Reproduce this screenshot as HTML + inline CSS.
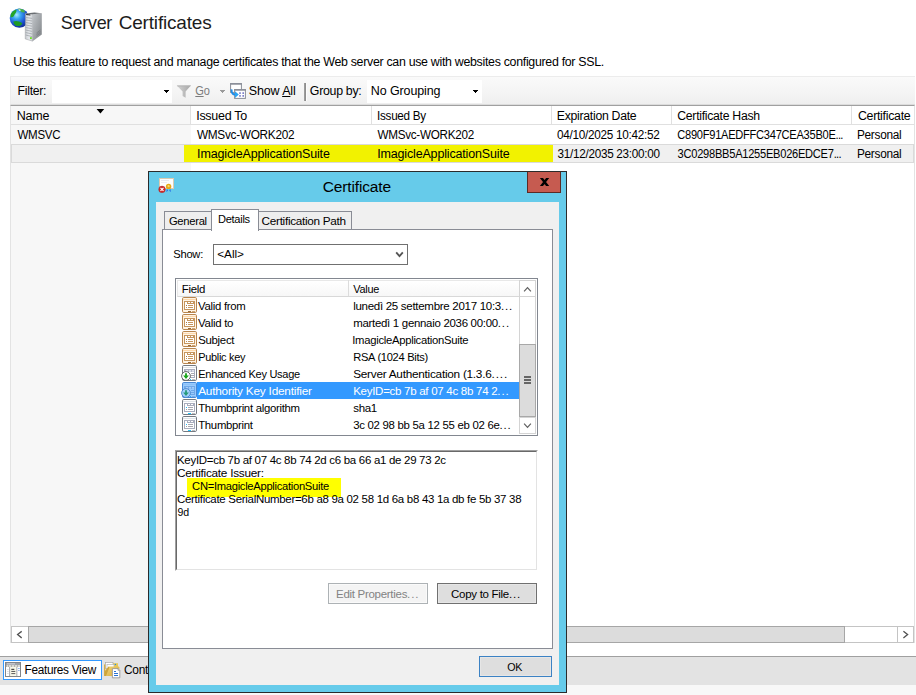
<!DOCTYPE html>
<html>
<head>
<meta charset="utf-8">
<title>Server Certificates</title>
<style>
*{box-sizing:border-box;margin:0;padding:0}
html,body{width:916px;height:695px;overflow:hidden;background:#fff}
body{font-family:"Liberation Sans",sans-serif;font-size:12px;color:#000;position:relative}
.a{position:absolute;white-space:nowrap}
.t{position:absolute;white-space:nowrap;line-height:14px;font-size:12.5px;color:#000}
.d{position:absolute;white-space:nowrap;line-height:13px;font-size:11.8px;color:#000}
u{text-decoration:underline}
</style>
</head>
<body>

<!-- ===== MAIN WINDOW ===== -->
<div class="a" id="title" style="left:60px;top:11px;letter-spacing:-0.300px;transform:translateX(0.80px) scaleX(0.9468);transform-origin:0 0;font-size:19px;line-height:24px;color:#1c1c1c">Server</div>
<div class="a" id="title2" style="left:118.70px;top:11px;letter-spacing:-0.184px;font-size:19px;line-height:24px;color:#1c1c1c">Certificates</div>
<div class="t" id="desc" style="left:13px;top:55px;letter-spacing:-0.300px;transform:translateX(0.30px) scaleX(0.9898);transform-origin:0 0">Use this feature to request and manage certificates that the Web server can use with websites configured for SSL.</div>

<!-- toolbar -->
<div class="a" style="left:10px;top:76px;width:905px;height:29px;background:linear-gradient(#fafafa,#f4f4f4 60%,#efefef);border-top:1px solid #ececec;border-left:1px solid #ececec;border-bottom:1px solid #dcdcdc"></div>
<div class="a" style="left:52px;top:80px;width:120px;height:23px;background:#fff"></div>
<div class="a" style="left:367px;top:80px;width:115px;height:23px;background:#fff"></div>
<div class="t" id="filter" style="left:17px;top:84px;letter-spacing:-0.300px;transform:translateX(0.62px) scaleX(0.9794);transform-origin:0 0">Filter:</div>
<div class="t" id="go" style="left:195px;top:84px;letter-spacing:-0.300px;transform:translateX(0.30px) scaleX(0.8829);transform-origin:0 0;color:#7c7c7c"><u>G</u>o</div>
<div class="t" id="showall" style="left:248.70px;top:84px;letter-spacing:-0.122px">Show <u>A</u>ll</div>
<div class="a" style="left:304px;top:83px;width:2px;height:18px;background:#9c9c9c;border-right:1px solid #8e8e8e"></div><div class="a" style="left:306px;top:83px;width:1px;height:18px;background:#fcfcfc"></div>
<div class="t" id="groupby" style="left:309px;top:84px;letter-spacing:-0.300px;transform:translateX(0.80px) scaleX(0.9901);transform-origin:0 0">Group by:</div>
<div class="t" id="nogroup" style="left:370.80px;top:84px;letter-spacing:-0.112px">No Grouping</div>

<!-- list -->
<div class="a" id="list" style="left:10px;top:105px;width:905px;height:538px;border:1px solid #e3e3e3;border-top:1px solid #a0a0a0;background:#fff"></div>
<div class="a" style="left:11px;top:106px;width:180px;height:520px;background:#f7f7f7"></div>
<!-- header -->
<div class="a" style="left:11px;top:106px;width:903px;height:19px;border-bottom:1px solid #e0e0e0"></div>
<div class="t" id="hName" style="left:16.80px;top:109px;letter-spacing:-0.231px">Name</div>
<div class="t" id="hTo" style="left:196.20px;top:109px;letter-spacing:-0.281px">Issued To</div>
<div class="t" id="hBy" style="left:377px;top:109px;letter-spacing:-0.300px;transform:translateX(0.07px) scaleX(0.9342);transform-origin:0 0">Issued By</div>
<div class="t" id="hExp" style="left:556px;top:109px;letter-spacing:-0.300px;transform:translateX(0.82px) scaleX(0.9824);transform-origin:0 0">Expiration Date</div>
<div class="t" id="hHash" style="left:677px;top:109px;letter-spacing:-0.300px;transform:translateX(0.30px) scaleX(0.9802);transform-origin:0 0">Certificate Hash</div>
<div class="t" id="hCert" style="left:857px;top:109px;letter-spacing:-0.300px;transform:translateX(0.90px) scaleX(0.9903);transform-origin:0 0">Certificate</div>
<!-- rows -->
<div class="a" style="left:11px;top:144px;width:903px;height:19px;background:#f0f0f0;border:1px solid #dadada"></div>
<div class="a" style="left:184px;top:145px;width:369px;height:17px;background:#f2f200"></div>
<div class="t" id="r1a" style="left:17px;top:128px;letter-spacing:-0.300px;transform:translateX(0.50px) scaleX(0.9232);transform-origin:0 0">WMSVC</div>
<div class="t" id="r1b" style="left:196px;top:128px;letter-spacing:-0.300px;transform:translateX(0.90px) scaleX(0.9449);transform-origin:0 0">WMSvc-WORK202</div>
<div class="t" id="r1c" style="left:377px;top:128px;letter-spacing:-0.300px;transform:translateX(0.50px) scaleX(0.9352);transform-origin:0 0">WMSvc-WORK202</div>
<div class="t" id="r1d" style="left:557px;top:128px;letter-spacing:-0.300px;transform:translateX(0.10px) scaleX(0.9402);transform-origin:0 0">04/10/2025 10:42:52</div>
<div class="t" id="r1e" style="left:677px;top:128px;letter-spacing:-0.300px;transform:translateX(0.30px) scaleX(0.8877);transform-origin:0 0">C890F91AEDFFC347CEA35B0E<span class="el" style="letter-spacing:-0.80px">...</span></div>
<div class="t" id="r1f" style="left:856px;top:128px;letter-spacing:-0.300px;transform:translateX(0.95px) scaleX(0.9459);transform-origin:0 0">Personal</div>
<div class="t" id="r2b" style="left:197.10px;top:147px;letter-spacing:-0.149px">ImagicleApplicationSuite</div>
<div class="t" id="r2c" style="left:377.20px;top:147px;letter-spacing:-0.162px">ImagicleApplicationSuite</div>
<div class="t" id="r2d" style="left:557px;top:147px;letter-spacing:-0.300px;transform:translateX(0.60px) scaleX(0.9365);transform-origin:0 0">31/12/2035 23:00:00</div>
<div class="t" id="r2e" style="left:677px;top:147px;letter-spacing:-0.300px;transform:translateX(0.60px) scaleX(0.8890);transform-origin:0 0">3C0298BB5A1255EB026EDCE7<span class="el" style="letter-spacing:-0.80px">...</span></div>
<div class="t" id="r2f" style="left:856px;top:147px;letter-spacing:-0.300px;transform:translateX(0.95px) scaleX(0.9459);transform-origin:0 0">Personal</div>


<!-- main icon: globe + server -->
<svg class="a" style="left:8px;top:6px" width="38" height="38" viewBox="8 6 38 38">
<defs>
<radialGradient id="gl" cx="0.36" cy="0.33" r="0.72"><stop offset="0" stop-color="#a8ecff"/><stop offset="0.3" stop-color="#3aa6f0"/><stop offset="0.7" stop-color="#1c4ed0"/><stop offset="1" stop-color="#0c2a90"/></radialGradient>
<linearGradient id="sf" x1="0" y1="0" x2="1" y2="0"><stop offset="0" stop-color="#c4c8cc"/><stop offset="0.5" stop-color="#e6e9ec"/><stop offset="1" stop-color="#cfd3d7"/></linearGradient>
<linearGradient id="ss" x1="0" y1="0" x2="1" y2="1"><stop offset="0" stop-color="#c2c6ca"/><stop offset="1" stop-color="#7e8286"/></linearGradient>
</defs>
<circle cx="19.3" cy="18.1" r="9.6" fill="url(#gl)"/>
<path d="M10.6,15.2 C11.2,12.6 13.2,10.6 16.2,9.6 C17,11.2 16,13 14.6,14.6 C14,16.6 12.6,17.6 10.6,17 Z" fill="#25a528"/>
<path d="M13.4,21.6 C15.6,20.2 19,21 22.4,23.2 C21.4,25.8 18,26.8 15.6,25.6 C14.2,24.6 13.5,23.2 13.4,21.6 Z" fill="#1f9a24"/>
<path d="M17.5,9 C19.5,8.4 22,8.8 24,10 L25.2,12.6 L21.5,12.2 C20.5,10.5 19,10.2 17.5,9 Z" fill="#49b04a"/>
<path d="M18.4,9.4 C19.4,9.2 20.4,9.6 21,10.6 L19.2,11 Z" fill="#e4f2e4"/>
<path d="M25.4,13.4 L32.6,14.2 L32.6,41.2 L25.2,38.9 Z" fill="url(#sf)" stroke="#8a8e92" stroke-width="0.4"/>
<path d="M32.6,14.2 L41.8,13.3 L41.8,34.6 L32.6,41.2 Z" fill="url(#ss)"/>
<path d="M25.4,13.4 L34.4,12.4 L41.8,13.3 L32.6,14.2 Z" fill="#6a6e72"/>
<path d="M26.2,14.1 L30.4,14.5 L30.4,15.6 L26.2,15.1 Z" fill="#1a1a1a"/>
<g stroke="#9a9ea4" stroke-width="0.7"><path d="M25.6,17.5 L32.2,18.4"/><path d="M25.6,20 L32.2,21"/><path d="M25.6,22.5 L32.2,23.6"/><path d="M25.6,25 L32.2,26.2"/><path d="M25.6,27.5 L32.2,28.8"/><path d="M25.6,30 L32.2,31.4"/><path d="M25.6,32.5 L32.2,34"/><path d="M25.6,35 L32.2,36.6"/></g>
<rect x="30" y="37.2" width="1.8" height="1.8" fill="#6ce020"/>
<g stroke="#6a6e72" stroke-width="0.5"><path d="M36.5,33 L40.5,30"/><path d="M36.5,34.5 L40.5,31.5"/><path d="M36.5,36 L40.5,33"/></g>
</svg>

<!-- toolbar icons -->
<svg class="a" style="left:176px;top:84px" width="16" height="15" viewBox="176 84 16 15">
<defs><linearGradient id="fn" x1="0" y1="0" x2="1" y2="0"><stop offset="0" stop-color="#d4d4d4"/><stop offset="1" stop-color="#a6a6a6"/></linearGradient></defs>
<path d="M176.8,85.4 H190.9 L185.6,91.6 V97.7 L182.6,96 V91.6 Z" fill="url(#fn)"/>
<path d="M176.8,85.4 H190.9 L190,86.5 H177.7 Z" fill="#b4b4b4"/>
</svg>
<svg class="a" style="left:164px;top:90px" width="5" height="3" viewBox="0 0 5 3"><rect x="0" y="0" width="5" height="1" fill="#000"/><rect x="1" y="1" width="3" height="1" fill="#000"/><rect x="2" y="2" width="1" height="1" fill="#000"/></svg>
<svg class="a" style="left:220px;top:90px" width="5" height="3" viewBox="0 0 5 3"><rect x="0" y="0" width="5" height="1" fill="#9a9a9a"/><rect x="1" y="1" width="3" height="1" fill="#9a9a9a"/><rect x="2" y="2" width="1" height="1" fill="#9a9a9a"/></svg>
<svg class="a" style="left:473px;top:90px" width="5" height="3" viewBox="0 0 5 3"><rect x="0" y="0" width="5" height="1" fill="#000"/><rect x="1" y="1" width="3" height="1" fill="#000"/><rect x="2" y="2" width="1" height="1" fill="#000"/></svg>
<svg class="a" style="left:229px;top:82px" width="18" height="18" viewBox="229 82 18 18">
<rect x="230.6" y="83.6" width="10.8" height="8.8" fill="#fff" stroke="#8a8e98" stroke-width="1"/>
<rect x="230.1" y="83.1" width="11.8" height="1.6" fill="#8a8e98"/>
<rect x="234.6" y="89.6" width="10.8" height="8.8" fill="#fff" stroke="#8a8e98" stroke-width="1"/>
<rect x="234.1" y="89.1" width="11.8" height="1.6" fill="#8a8e98"/>
<rect x="239.2" y="92.3" width="1.6" height="1.6" fill="#7074c4"/><rect x="242.4" y="92.3" width="1.6" height="1.6" fill="#7074c4"/>
<rect x="239.2" y="95.1" width="1.6" height="1.6" fill="#7074c4"/><rect x="242.4" y="95.1" width="1.6" height="1.6" fill="#7074c4"/>
<path d="M231.6,89.4 C231.4,93 232.6,94.8 235.6,94.6" fill="none" stroke="#1e8ce8" stroke-width="1.9"/>
<path d="M235,91.2 L238.8,94.6 L235,98 Z" fill="#28a4f4"/>
</svg>

<!-- sort arrow + header separators -->
<svg class="a" style="left:96px;top:109px" width="9" height="5" viewBox="0 0 9 5"><path d="M0.6,0 H8.2 L4.4,4.4 Z" fill="#000"/></svg>
<div class="a" style="left:190px;top:106px;width:1px;height:18px;background:#e0e0e0"></div>
<div class="a" style="left:371px;top:106px;width:1px;height:18px;background:#e0e0e0"></div>
<div class="a" style="left:551px;top:106px;width:1px;height:18px;background:#e0e0e0"></div>
<div class="a" style="left:671px;top:106px;width:1px;height:18px;background:#e0e0e0"></div>
<div class="a" style="left:851px;top:106px;width:1px;height:18px;background:#e0e0e0"></div>
<!-- h scrollbar -->
<div class="a" style="left:11px;top:626px;width:903px;height:17px;background:#fff;border:1px solid #c4c4c4"></div>
<div class="a" style="left:11px;top:626px;width:18px;height:17px;background:#fff;border:1px solid #c4c4c4"></div>
<div class="a" style="left:897px;top:626px;width:17px;height:17px;background:#fff;border:1px solid #c4c4c4"></div>
<div class="a" style="left:28px;top:626px;width:817px;height:17px;background:#dcdcdc;border:1px solid #a6a6a6"></div>


<!-- h scroll arrows -->
<svg class="a" style="left:16px;top:630px" width="6" height="10" viewBox="0 0 6 10"><path d="M5.7,1.3 L1.6,4.6 L5.7,7.9" stroke="#505050" stroke-width="1.3" fill="none"/></svg>
<svg class="a" style="left:903px;top:630px" width="6" height="10" viewBox="0 0 6 10"><path d="M0.4,1.3 L4.6,4.6 L0.4,7.9" stroke="#505050" stroke-width="1.3" fill="none"/></svg>
<!-- bottom bar -->
<div class="a" style="left:0;top:656px;width:916px;height:29px;background:#e3e3e3;border-top:1px solid #a0a0a0"></div>
<div class="a" style="left:0;top:685px;width:916px;height:10px;background:#f8f8f8"></div>
<div class="a" style="left:3px;top:660px;width:99px;height:20px;background:#fff;border:1px solid #3399ff"></div>
<div class="t" id="fv" style="left:24px;top:663px;letter-spacing:-0.300px;transform:translateX(0.46px) scaleX(0.9429);transform-origin:0 0">Features View</div>
<div class="t" id="cv" style="left:124px;top:663px;letter-spacing:-0.300px;transform:translateX(0.00px) scaleX(0.9541);transform-origin:0 0">Content View</div>


<!-- features view icon -->
<svg class="a" style="left:5px;top:662px" width="16" height="15" viewBox="0 0 16 15">
<rect x="0.5" y="0.5" width="15" height="14" fill="#fff" stroke="#80858a"/>
<rect x="1" y="1" width="14" height="2" fill="#9ca0a6"/><rect x="2" y="1.4" width="8" height="0.9" fill="#d8dce4"/>
<rect x="1" y="3" width="14" height="2" fill="#b4b4ac"/>
<rect x="2" y="3.5" width="1" height="1" fill="#fff"/><rect x="4" y="3.5" width="2" height="1" fill="#fff"/><rect x="7" y="3.5" width="2" height="1" fill="#fff"/><rect x="10" y="3.5" width="2" height="1" fill="#fff"/><rect x="13" y="3.5" width="2" height="1" fill="#fff"/>
<rect x="5" y="5" width="6.5" height="9" fill="#f8f8e8"/>
<rect x="4.2" y="5" width="0.9" height="9" fill="#9ca0a6"/><rect x="11.4" y="5" width="0.9" height="9" fill="#9ca0a6"/>
<rect x="6.3" y="6.8" width="3" height="1.1" fill="#383838"/><rect x="6.3" y="8.9" width="4" height="1.1" fill="#606060"/><rect x="6.3" y="11" width="4" height="1.1" fill="#686868"/>
<rect x="2.3" y="7" width="1.2" height="0.8" fill="#c8c8c8"/><rect x="2.3" y="9" width="1.2" height="0.8" fill="#c8c8c8"/><rect x="2.3" y="11" width="1.2" height="0.8" fill="#c8c8c8"/>
<rect x="13.2" y="6" width="1.4" height="0.9" fill="#6a9ae8"/><rect x="13.2" y="8" width="1.4" height="0.9" fill="#6a9ae8"/>
</svg>
<!-- content view icon -->
<svg class="a" style="left:103px;top:661px" width="18" height="18" viewBox="103 661 18 18">
<defs><linearGradient id="fo" x1="0" y1="0" x2="1" y2="1"><stop offset="0" stop-color="#f4dc84"/><stop offset="1" stop-color="#d4a83c"/></linearGradient></defs>
<path d="M113,663.2 H118 V668 H113 Z" fill="#ecc850"/>
<circle cx="115.4" cy="664.5" r="0.8" fill="#2a90e0"/>
<rect x="105.4" y="662.4" width="7.6" height="6" fill="#fff" stroke="#a8a8a8" stroke-width="0.7"/>
<rect x="107" y="664.4" width="7" height="5" fill="#fff" stroke="#b4b4b4" stroke-width="0.7"/>
<path d="M104.2,664.5 L105.2,664.5 L105.2,671 L108.6,666.6 L119,666.6 L119.6,668 L116,676 L104.2,676 Z" fill="url(#fo)"/>
<path d="M104.2,664.5 L104.2,676 L106,676 L109.4,667.6 L108.6,666.6 L105.2,671 L105.2,664.5 Z" fill="#cda43a"/>
<path d="M112.4,668.6 H118 L119.8,670.4 V677.8 H112.4 Z" fill="#fff" stroke="#8e8e8e" stroke-width="0.8"/>
<path d="M118,668.6 V670.4 H119.8" fill="none" stroke="#8e8e8e" stroke-width="0.6"/>
<rect x="114" y="671" width="2" height="1" fill="#2a72d4"/><rect x="114" y="673" width="4" height="1" fill="#2a72d4"/><rect x="114" y="675" width="4" height="1" fill="#2a72d4"/>
</svg>
<!-- ===== DIALOG ===== -->
<div class="a" id="dlg" style="left:148px;top:171px;width:419px;height:522px;background:#66cbea;border:1px solid #2b2b2b"></div>
<div class="a" id="client" style="left:156px;top:202px;width:403px;height:483px;background:#f0f0f0"></div>
<div class="a" id="dtitle" style="left:322.80px;top:177px;letter-spacing:-0.155px;font-size:15.5px;line-height:20px">Certificate</div>
<div class="a" style="left:527px;top:172px;width:34px;height:21px;background:#c65b50;border:1px solid #5c2a25;border-top:none"></div>
<svg class="a" style="left:539px;top:177px" width="11" height="10" viewBox="0 0 11 10"><path d="M0.9,0.9 H4 L10.2,9.1 H7.1 Z M7.1,0.9 H10.2 L4,9.1 H0.9 Z" fill="#000"/></svg>

<!-- tabs -->
<div class="a" style="left:162px;top:229px;width:391px;height:420px;background:#fff;border:1px solid #898c95"></div>
<div class="a" style="left:164px;top:211px;width:48px;height:19px;background:#eeeeee;border:1px solid #898c95"></div>
<div class="a" style="left:258px;top:211px;width:94px;height:19px;background:#eeeeee;border:1px solid #898c95"></div>
<div class="a" style="left:211px;top:209px;width:48px;height:22px;background:#fff;border:1px solid #898c95;border-bottom:none"></div>
<div class="d" id="tgen" style="left:168px;top:215px;letter-spacing:-0.300px;transform:translateX(0.90px) scaleX(0.9507);transform-origin:0 0">General</div>
<div class="d" id="tdet" style="left:217px;top:213px;letter-spacing:-0.300px;transform:translateX(0.90px) scaleX(0.9400);transform-origin:0 0">Details</div>
<div class="d" id="tcp" style="left:261px;top:215px;letter-spacing:-0.300px;transform:translateX(0.60px) scaleX(0.9968);transform-origin:0 0">Certification Path</div>

<div class="d" id="show" style="left:173px;top:248px;letter-spacing:-0.300px;transform:translateX(0.30px) scaleX(0.9486);transform-origin:0 0">Show:</div>
<div class="a" style="left:213px;top:244px;width:195px;height:21px;background:#fff;border:1px solid #707070"></div>
<div class="d" id="all" style="left:217.30px;top:248px;letter-spacing:-0.075px">&lt;All&gt;</div>
<svg class="a" style="left:395px;top:251px" width="9" height="8" viewBox="0 0 9 8"><path d="M1.2,1.4 L4.5,5.2 L7.8,1.4" stroke="#555" stroke-width="1.8" fill="none"/></svg>

<!-- field list -->
<div class="a" style="left:175px;top:278px;width:363px;height:158px;background:#fff;border:1px solid #828790"></div>
<div class="a" style="left:177px;top:280px;width:342px;height:17px;background:linear-gradient(#fff,#f7f7f7);border:1px solid #e8e8e8;border-bottom:1px solid #d8d8d8;border-right:none"></div>
<div class="a" style="left:348px;top:280px;width:1px;height:16px;background:#dcdcdc"></div>

<div class="d" id="hfield" style="left:181px;top:283px;letter-spacing:-0.300px;transform:translateX(0.80px) scaleX(0.9660);transform-origin:0 0">Field</div>
<div class="d" id="hvalue" style="left:353px;top:283px;letter-spacing:-0.300px;transform:translateX(0.30px) scaleX(0.9252);transform-origin:0 0">Value</div>
<!-- selected row -->
<div class="a" style="left:197px;top:382px;width:322px;height:17px;background:#3399ff"></div>

<!-- rows text -->
<div class="d" id="f1" style="left:198px;top:300px;letter-spacing:-0.300px;transform:translateX(0.10px) scaleX(0.9638);transform-origin:0 0">Valid from</div>
<div class="d" id="f2" style="left:198px;top:317px;letter-spacing:-0.300px;transform:translateX(0.10px) scaleX(0.9725);transform-origin:0 0">Valid to</div>
<div class="d" id="f3" style="left:198px;top:334px;letter-spacing:-0.300px;transform:translateX(0.20px) scaleX(0.9668);transform-origin:0 0">Subject</div>
<div class="d" id="f4" style="left:198px;top:351px;letter-spacing:-0.300px;transform:translateX(0.20px) scaleX(0.9264);transform-origin:0 0">Public key</div>
<div class="d" id="f5" style="left:198px;top:368px;letter-spacing:-0.300px;transform:translateX(0.20px) scaleX(0.9355);transform-origin:0 0">Enhanced Key Usage</div>
<div class="d" id="f6" style="left:198.20px;top:385px;letter-spacing:-0.215px;color:#fff">Authority Key Identifier</div>
<div class="d" id="f7" style="left:198px;top:402px;letter-spacing:-0.300px;transform:translateX(0.20px) scaleX(0.9629);transform-origin:0 0">Thumbprint algorithm</div>
<div class="d" id="f8" style="left:198px;top:419px;letter-spacing:-0.300px;transform:translateX(0.20px) scaleX(0.9621);transform-origin:0 0">Thumbprint</div>
<div class="d" id="v1" style="left:353px;top:300px;letter-spacing:-0.300px;transform:translateX(0.20px) scaleX(0.9761);transform-origin:0 0">lunedì 25 settembre 2017 10:3<span class="el" style="letter-spacing:0.90px">...</span></div>
<div class="d" id="v2" style="left:353px;top:317px;letter-spacing:-0.300px;transform:translateX(0.20px) scaleX(0.9703);transform-origin:0 0">martedì 1 gennaio 2036 00:00<span class="el" style="letter-spacing:0.90px">...</span></div>
<div class="d" id="v3" style="left:352px;top:334px;letter-spacing:-0.300px;transform:translateX(0.24px) scaleX(0.9565);transform-origin:0 0">ImagicleApplicationSuite</div>
<div class="d" id="v4" style="left:353px;top:351px;letter-spacing:-0.300px;transform:translateX(0.20px) scaleX(0.9422);transform-origin:0 0">RSA (1024 Bits)</div>
<div class="d" id="v5" style="left:353.20px;top:368px;letter-spacing:-0.260px">Server Authentication (1.3.6<span class="el" style="letter-spacing:0.90px">....</span></div>
<div class="d" id="v6" style="left:353px;top:385px;letter-spacing:-0.300px;transform:translateX(0.20px) scaleX(0.9778);transform-origin:0 0;color:#fff">KeyID=cb 7b af 07 4c 8b 74 2<span class="el" style="letter-spacing:0.90px">...</span></div>
<div class="d" id="v7" style="left:353px;top:402px;letter-spacing:-0.300px;transform:translateX(0.20px) scaleX(0.9743);transform-origin:0 0">sha1</div>
<div class="d" id="v8" style="left:353px;top:419px;letter-spacing:-0.300px;transform:translateX(0.20px) scaleX(0.9668);transform-origin:0 0">3c 02 98 bb 5a 12 55 eb 02 6e<span class="el" style="letter-spacing:0.90px">...</span></div>

<!-- list icons -->
<svg class="a" style="left:182px;top:297px" width="15" height="16" viewBox="0 0 15 16"><rect x="0.5" y="0.5" width="14" height="15" rx="1.3" fill="#fff4e4" stroke="#b8854e"/>
<rect x="1" y="2" width="13" height="1" fill="#ffd9ab"/>
<rect x="2.5" y="4.5" width="10" height="8" fill="#fff" stroke="#c6965e"/>
<rect x="5" y="5" width="7.5" height="2" fill="#c6965e"/>
<rect x="6" y="5" width="2" height="1" fill="#fff"/><rect x="9" y="5" width="2" height="1" fill="#fff"/>
<rect x="4" y="8" width="1" height="1" fill="#a8743c"/><rect x="4" y="10" width="1" height="1" fill="#c09058"/>
<rect x="6" y="8" width="5" height="1" fill="#c6965e"/><rect x="6" y="10" width="5" height="1" fill="#c6965e"/>
<rect x="6" y="14" width="3" height="1" fill="#9a6a3a"/><rect x="10" y="14" width="3" height="1" fill="#d0a878"/></svg>
<svg class="a" style="left:182px;top:314px" width="15" height="16" viewBox="0 0 15 16"><rect x="0.5" y="0.5" width="14" height="15" rx="1.3" fill="#fff4e4" stroke="#b8854e"/>
<rect x="1" y="2" width="13" height="1" fill="#ffd9ab"/>
<rect x="2.5" y="4.5" width="10" height="8" fill="#fff" stroke="#c6965e"/>
<rect x="5" y="5" width="7.5" height="2" fill="#c6965e"/>
<rect x="6" y="5" width="2" height="1" fill="#fff"/><rect x="9" y="5" width="2" height="1" fill="#fff"/>
<rect x="4" y="8" width="1" height="1" fill="#a8743c"/><rect x="4" y="10" width="1" height="1" fill="#c09058"/>
<rect x="6" y="8" width="5" height="1" fill="#c6965e"/><rect x="6" y="10" width="5" height="1" fill="#c6965e"/>
<rect x="6" y="14" width="3" height="1" fill="#9a6a3a"/><rect x="10" y="14" width="3" height="1" fill="#d0a878"/></svg>
<svg class="a" style="left:182px;top:331px" width="15" height="16" viewBox="0 0 15 16"><rect x="0.5" y="0.5" width="14" height="15" rx="1.3" fill="#fff4e4" stroke="#b8854e"/>
<rect x="1" y="2" width="13" height="1" fill="#ffd9ab"/>
<rect x="2.5" y="4.5" width="10" height="8" fill="#fff" stroke="#c6965e"/>
<rect x="5" y="5" width="7.5" height="2" fill="#c6965e"/>
<rect x="6" y="5" width="2" height="1" fill="#fff"/><rect x="9" y="5" width="2" height="1" fill="#fff"/>
<rect x="4" y="8" width="1" height="1" fill="#a8743c"/><rect x="4" y="10" width="1" height="1" fill="#c09058"/>
<rect x="6" y="8" width="5" height="1" fill="#c6965e"/><rect x="6" y="10" width="5" height="1" fill="#c6965e"/>
<rect x="6" y="14" width="3" height="1" fill="#9a6a3a"/><rect x="10" y="14" width="3" height="1" fill="#d0a878"/></svg>
<svg class="a" style="left:182px;top:348px" width="15" height="16" viewBox="0 0 15 16"><rect x="0.5" y="0.5" width="14" height="15" rx="1.3" fill="#fff4e4" stroke="#b8854e"/>
<rect x="1" y="2" width="13" height="1" fill="#ffd9ab"/>
<rect x="2.5" y="4.5" width="10" height="8" fill="#fff" stroke="#c6965e"/>
<rect x="5" y="5" width="7.5" height="2" fill="#c6965e"/>
<rect x="6" y="5" width="2" height="1" fill="#fff"/><rect x="9" y="5" width="2" height="1" fill="#fff"/>
<rect x="4" y="8" width="1" height="1" fill="#a8743c"/><rect x="4" y="10" width="1" height="1" fill="#c09058"/>
<rect x="6" y="8" width="5" height="1" fill="#c6965e"/><rect x="6" y="10" width="5" height="1" fill="#c6965e"/>
<rect x="6" y="14" width="3" height="1" fill="#9a6a3a"/><rect x="10" y="14" width="3" height="1" fill="#d0a878"/></svg>
<svg class="a" style="left:181px;top:365px" width="16" height="16" viewBox="-1 0 16 16"><rect x="0.5" y="0.5" width="14" height="15" rx="1.3" fill="#fff" stroke="#747a82"/>
<rect x="1" y="2" width="13" height="1" fill="#dfe3e8"/>
<rect x="2.5" y="4.5" width="10" height="8" fill="#fff" stroke="#a9adbd"/>
<rect x="3" y="5" width="9.5" height="2" fill="#b4b8cc"/>
<rect x="4" y="5.4" width="2" height="1" fill="#fff"/><rect x="7" y="5.4" width="2" height="1" fill="#fff"/><rect x="10" y="5.4" width="2" height="1" fill="#fff"/>
<rect x="9" y="8" width="3" height="1" fill="#a8a8b0"/><rect x="9" y="10" width="3" height="1" fill="#a8a8b0"/>
<rect x="8" y="14" width="1" height="1" fill="#22c4ff"/><rect x="10" y="14" width="3" height="1" fill="#c0c0c0"/>
<circle cx="4" cy="11" r="4.4" fill="#fff" stroke="#5a5a5a" stroke-width="0.9"/>
<path d="M3.1,8.2 H4.9 V10.6 H6.9 L4,13.9 L1.1,10.6 H3.1 Z" fill="#18a418"/></svg>
<svg class="a" style="left:181px;top:382px" width="16" height="16" viewBox="-1 0 16 16"><rect x="0.5" y="0.5" width="14" height="15" rx="1.3" fill="#99cbfd" stroke="#4888d4"/>
<rect x="1" y="2" width="13" height="1" fill="#8cc0f8"/>
<rect x="2.5" y="4.5" width="10" height="8" fill="#99cbfd" stroke="#6fa8e8"/>
<rect x="3" y="5" width="9.5" height="2" fill="#78aeec"/>
<rect x="4" y="5.4" width="2" height="1" fill="#c4e0ff"/><rect x="7" y="5.4" width="2" height="1" fill="#c4e0ff"/><rect x="10" y="5.4" width="2" height="1" fill="#c4e0ff"/>
<rect x="9" y="8" width="3" height="1" fill="#6fa8e8"/><rect x="9" y="10" width="3" height="1" fill="#6fa8e8"/>
<rect x="8" y="14" width="1" height="1" fill="#22aaff"/><rect x="10" y="14" width="3" height="1" fill="#7ab0ec"/>
<circle cx="4" cy="11" r="4.4" fill="#a4d0fc" stroke="#4a86cc" stroke-width="0.9"/>
<path d="M3.1,8.2 H4.9 V10.6 H6.9 L4,13.9 L1.1,10.6 H3.1 Z" fill="#279a7c"/></svg>
<svg class="a" style="left:182px;top:399px" width="15" height="16" viewBox="0 0 15 16"><rect x="0.5" y="0.5" width="14" height="15" rx="1.3" fill="#fff" stroke="#747a82"/>
<rect x="1" y="2" width="13" height="1" fill="#dfe3e8"/>
<rect x="2.5" y="4.5" width="10" height="8" fill="#fff" stroke="#a9adbd"/>
<rect x="5" y="5" width="7.5" height="2" fill="#a9adbd"/>
<rect x="6" y="5" width="2" height="1" fill="#fff"/><rect x="9" y="5" width="2" height="1" fill="#fff"/>
<rect x="4" y="8" width="1" height="1" fill="#22bbff"/><rect x="4" y="10" width="1" height="1" fill="#a0a0a0"/>
<rect x="6" y="8" width="5" height="1" fill="#a8a8b0"/><rect x="6" y="10" width="5" height="1" fill="#a8a8b0"/>
<rect x="6" y="14" width="3" height="1" fill="#22c4ff"/><rect x="10" y="14" width="3" height="1" fill="#c0c0c0"/></svg>
<svg class="a" style="left:182px;top:416px" width="15" height="16" viewBox="0 0 15 16"><rect x="0.5" y="0.5" width="14" height="15" rx="1.3" fill="#fff" stroke="#747a82"/>
<rect x="1" y="2" width="13" height="1" fill="#dfe3e8"/>
<rect x="2.5" y="4.5" width="10" height="8" fill="#fff" stroke="#a9adbd"/>
<rect x="5" y="5" width="7.5" height="2" fill="#a9adbd"/>
<rect x="6" y="5" width="2" height="1" fill="#fff"/><rect x="9" y="5" width="2" height="1" fill="#fff"/>
<rect x="4" y="8" width="1" height="1" fill="#22bbff"/><rect x="4" y="10" width="1" height="1" fill="#a0a0a0"/>
<rect x="6" y="8" width="5" height="1" fill="#a8a8b0"/><rect x="6" y="10" width="5" height="1" fill="#a8a8b0"/>
<rect x="6" y="14" width="3" height="1" fill="#22c4ff"/><rect x="10" y="14" width="3" height="1" fill="#c0c0c0"/></svg>
<!-- title icon -->
<svg class="a" style="left:158px;top:177px" width="18" height="17" viewBox="0 0 18 17">
<rect x="1.5" y="1.5" width="14" height="10" fill="#fdfdfd" stroke="#dccbb0"/>
<rect x="3" y="3" width="8" height="1" fill="#e8e8f0"/><rect x="3" y="5" width="6" height="1" fill="#ececf4"/>
<path d="M9,11.5 L8.3,15 L10,13.8 Z M12.2,11.5 L13,15 L11.3,13.8 Z" fill="#2468e8"/>
<circle cx="10.6" cy="9.4" r="2.7" fill="#e6a818"/><circle cx="10.6" cy="9.2" r="1.1" fill="#f8dc70"/>
<circle cx="4" cy="12.4" r="3.3" fill="#d42424" stroke="#a04040" stroke-width="0.5"/>
<path d="M2.5,10.9 L5.5,13.9 M5.5,10.9 L2.5,13.9" stroke="#fff" stroke-width="1.2"/>
</svg>
<!-- v scrollbar -->
<div class="a" style="left:519px;top:280px;width:17px;height:154px;background:#fff;border-left:1px solid #d4d4d4;border-right:1px solid #d4d4d4"></div>
<div class="a" style="left:519px;top:280px;width:17px;height:17px;background:#fff;border:1px solid #d4d4d4"></div>
<div class="a" style="left:519px;top:417px;width:17px;height:17px;background:#fff;border:1px solid #d4d4d4"></div>
<div class="a" style="left:519px;top:344px;width:17px;height:73px;background:#dcdcdc;border:1px solid #a8a8a8"></div>
<svg class="a" style="left:523px;top:286px" width="9" height="7" viewBox="0 0 9 7"><path d="M1.1,5.4 L4.5,1.7 L7.9,5.4" stroke="#606060" stroke-width="1.2" fill="none"/></svg>
<svg class="a" style="left:523px;top:422px" width="9" height="7" viewBox="0 0 9 7"><path d="M1.1,1.6 L4.5,5.3 L7.9,1.6" stroke="#606060" stroke-width="1.2" fill="none"/></svg>
<div class="a" style="left:524px;top:376px;width:7px;height:2px;background:#666"></div>
<div class="a" style="left:524px;top:379px;width:7px;height:2px;background:#666"></div>
<div class="a" style="left:524px;top:382px;width:7px;height:2px;background:#666"></div>

<!-- detail text box -->
<div class="a" style="left:175px;top:450px;width:363px;height:121px;background:#fff;border:1px solid #fff;border-top-color:#a0a0a0;border-left-color:#a0a0a0"></div><div class="a" style="left:176px;top:451px;width:361px;height:119px;border:1px solid #e3e3e3;border-top-color:#696969;border-left-color:#696969"></div>
<div class="a" style="left:187px;top:478px;width:154px;height:19px;background:#ffff00"></div>
<div class="d" id="l1" style="left:177px;top:454px;letter-spacing:-0.300px;transform:translateX(0.00px) scaleX(0.9726);transform-origin:0 0">KeyID=cb 7b af 07 4c 8b 74 2d c6 ba 66 a1 de 29 73 2c</div>
<div class="d" id="l2" style="left:177.00px;top:467px;letter-spacing:-0.267px">Certificate Issuer:</div>
<div class="d" id="l3" style="left:192px;top:480px;letter-spacing:-0.300px;transform:translateX(0.10px) scaleX(0.9477);transform-origin:0 0">CN=ImagicleApplicationSuite</div>
<div class="d" id="l4" style="left:177px;top:493px;letter-spacing:-0.300px;transform:translateX(0.00px) scaleX(0.9722);transform-origin:0 0">Certificate SerialNumber=6b a8 9a 02 58 1d 6a b8 43 1a db fe 5b 37 38</div>
<div class="d" id="l5" style="left:177px;top:506px;letter-spacing:-0.300px;transform:translateX(0.60px) scaleX(0.8972);transform-origin:0 0">9d</div>

<!-- buttons -->
<div class="a" style="left:328px;top:583px;width:100px;height:21px;background:#f4f4f4;border:1px solid #adb2b5;box-shadow:inset 0 0 0 1px #fafafa"></div>
<div class="d" id="bedit" style="left:336px;top:588px;letter-spacing:-0.300px;transform:translateX(0.00px) scaleX(0.9759);transform-origin:0 0;color:#838383">Edit Properties<span class="el" style="letter-spacing:0.90px">...</span></div>
<div class="a" style="left:437px;top:583px;width:100px;height:21px;background:#dedede;border:1px solid #707070;box-shadow:inset 0 0 0 1px #e6e6e6"></div>
<div class="d" id="bcopy" style="left:451px;top:588px;letter-spacing:-0.300px;transform:translateX(0.10px) scaleX(0.9746);transform-origin:0 0">Copy to File<span class="el" style="letter-spacing:0.90px">...</span></div>
<div class="a" style="left:479px;top:656px;width:73px;height:21px;background:#dedede;border:1px solid #3c82c4;box-shadow:inset 0 0 0 1px #e6e6e6"></div>
<div class="d" id="bok" style="left:507px;top:661px;letter-spacing:-0.300px;transform:translateX(0.30px) scaleX(0.9066);transform-origin:0 0">OK</div>


</body>
</html>
